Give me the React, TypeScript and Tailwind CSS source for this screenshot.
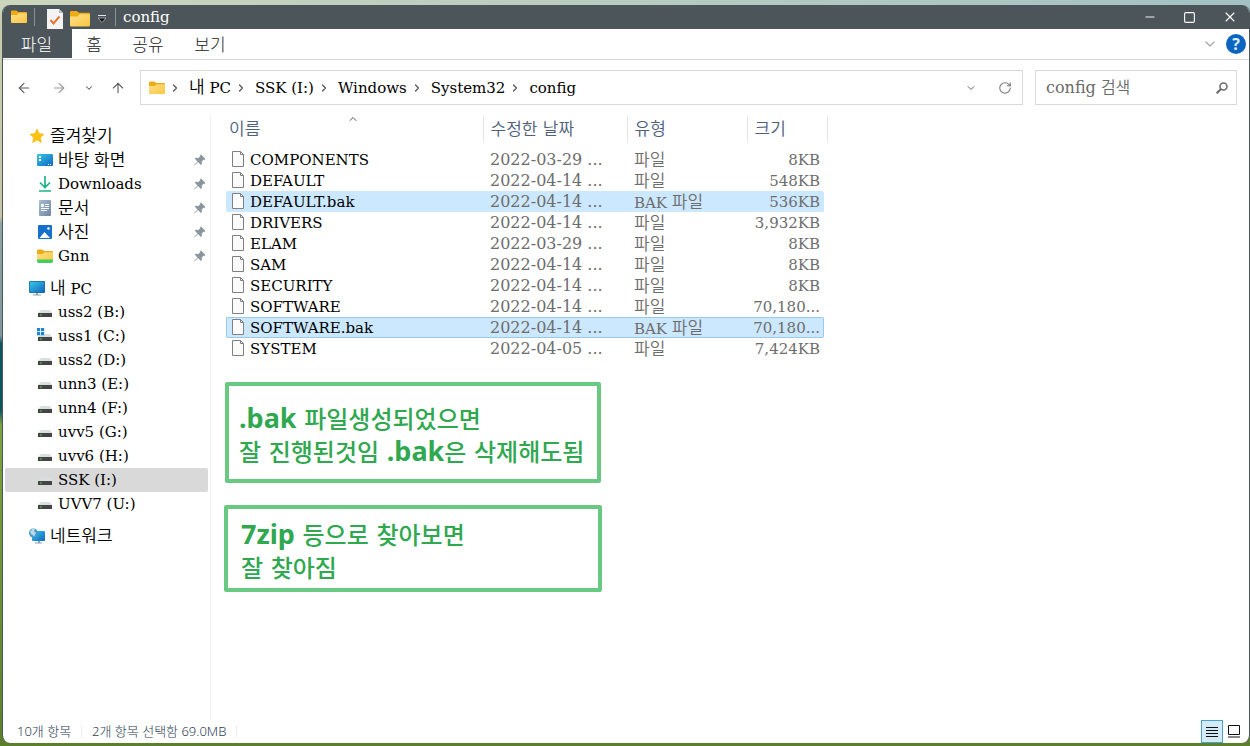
import { ArrowLeft, ArrowRight, ArrowUp, ChevronDown, ChevronRight, ChevronUp, Minus, RotateCw, Square, X } from 'lucide-react';
import type { ReactNode } from 'react';

const serif = "font-['DejaVu_Serif','Noto_Sans_CJK_KR',serif]";
const sans = "font-['Noto_Sans_CJK_KR',sans-serif]";

const files = [
  { name: 'COMPONENTS', date: '2022-03-29 ...', type: '파일', size: '8KB' },
  { name: 'DEFAULT', date: '2022-04-14 ...', type: '파일', size: '548KB' },
  { name: 'DEFAULT.bak', date: '2022-04-14 ...', type: 'BAK 파일', size: '536KB', selected: true },
  { name: 'DRIVERS', date: '2022-04-14 ...', type: '파일', size: '3,932KB' },
  { name: 'ELAM', date: '2022-03-29 ...', type: '파일', size: '8KB' },
  { name: 'SAM', date: '2022-04-14 ...', type: '파일', size: '8KB' },
  { name: 'SECURITY', date: '2022-04-14 ...', type: '파일', size: '8KB' },
  { name: 'SOFTWARE', date: '2022-04-14 ...', type: '파일', size: '70,180...' },
  { name: 'SOFTWARE.bak', date: '2022-04-14 ...', type: 'BAK 파일', size: '70,180...', selected: true, focused: true },
  { name: 'SYSTEM', date: '2022-04-05 ...', type: '파일', size: '7,424KB' },
];

const drives = ['uss2 (B:)', 'uss1 (C:)', 'uss2 (D:)', 'unn3 (E:)', 'unn4 (F:)', 'uvv5 (G:)', 'uvv6 (H:)', 'SSK (I:)', 'UVV7 (U:)'];

const crumbs = ['내 PC', 'SSK (I:)', 'Windows', 'System32', 'config'];

// Hangul is set a little larger than the Latin text beside it
function Mixed({ text }: { text: string }) {
  return (
    <>
      {text.split(/([가-힣]+)/).map((part, i) =>
        i % 2 ? <span key={i} className="text-[17px] font-[350]">{part}</span> : part,
      )}
    </>
  );
}

function FolderIcon({ className, green }: { className?: string; green?: boolean }) {
  return (
    <svg viewBox="0 0 16 14" className={className} aria-hidden="true">
      <defs>
        <linearGradient id="folder" x1="0" y1="0" x2="1" y2="1">
          <stop offset="0" stopColor="#ffe08a" />
          <stop offset="1" stopColor="#fbc640" />
        </linearGradient>
      </defs>
      <path d="M0 1.5Q0 .5 1 .5h4.5L7.2 2H15q1 0 1 1v3H0z" fill="#ecac18" />
      <path d="M0 5h6l1.6-1.8H15q1 0 1 1V12q0 1-1 1H1q-1 0-1-1z" fill="url(#folder)" />
      {green && <path d="M0 10.5h16v1.5q0 2-2 2H2q-2 0-2-2z" fill="#3fd05a" />}
    </svg>
  );
}

function StarIcon() {
  return (
    <svg viewBox="0 0 16 16" className="h-4 w-4" aria-hidden="true">
      <path d="M8 1l2.1 4.6 4.9.6-3.6 3.4 1 5L8 12.1 3.6 14.6l1-5L1 6.2l4.9-.6z" fill="#fdc30d" stroke="#f5b30a" strokeWidth=".6" strokeLinejoin="round" />
    </svg>
  );
}

function DesktopIcon() {
  return (
    <svg viewBox="0 0 16 16" className="h-4 w-4" aria-hidden="true">
      <defs>
        <linearGradient id="screen" x1="0" y1="0" x2="1" y2="1">
          <stop offset="0" stopColor="#35c9e4" />
          <stop offset="1" stopColor="#1265c0" />
        </linearGradient>
      </defs>
      <rect y="2" width="16" height="12" rx="1" fill="url(#screen)" />
      <path d="M2 4h2v2H2zM2 7h2v2H2zM11 12h1v1h-1zM13 12h1v1h-1z" fill="#fff" />
    </svg>
  );
}

function DownloadIcon() {
  return (
    <svg viewBox="0 0 16 16" className="h-4 w-4" fill="none" stroke="#1fb28c" strokeWidth="1.7" aria-hidden="true">
      <path d="M8 0v11M3 6.500l5 5 5-5M2 15h12" />
    </svg>
  );
}

function DocumentIcon() {
  return (
    <svg viewBox="0 0 16 16" className="h-4 w-4" aria-hidden="true">
      <defs>
        <linearGradient id="doc" x1="0" y1="0" x2="1" y2="1">
          <stop offset="0" stopColor="#a9bdd2" />
          <stop offset="1" stopColor="#6d86a4" />
        </linearGradient>
      </defs>
      <rect x="2" width="12" height="16" rx="1" fill="url(#doc)" />
      <path d="M4 4h3v3H4zM8 4h4v1H8zM8 6h4v1H8zM4 8h8v1H4zM4 10h6v1H4z" fill="#fff" />
    </svg>
  );
}

function PictureIcon() {
  return (
    <svg viewBox="0 0 16 16" className="h-4 w-4" aria-hidden="true">
      <rect x="1" y="1" width="14" height="14" rx="1" fill="#1671cc" />
      <path d="M2.500 14L7.500 8l5.500 6z" fill="#fff" />
      <circle cx="11.5" cy="4.5" r="1.3" fill="#fff" />
    </svg>
  );
}

function MonitorIcon() {
  return (
    <svg viewBox="0 0 16 16" className="h-4 w-4" aria-hidden="true">
      <rect y="1" width="16" height="12" rx="1" fill="#18699f" />
      <rect x=".7" y="1.7" width="14.6" height="10.6" fill="url(#screen)" />
      <path d="M7 13h2v1.5h3v1H4v-1h3z" fill="#8aa2b3" />
    </svg>
  );
}

function NetworkIcon() {
  return (
    <svg viewBox="0 0 16 16" className="h-4 w-4" aria-hidden="true">
      <rect x="3" y="3" width="13" height="10" rx="1" fill="url(#screen)" />
      <path d="M9 13h2v1.5h2v1H6v-1h3z" fill="#8aa2b3" />
      <circle cx="4.5" cy="5" r="4.5" fill="#4e9ac6" />
      <path d="M1 3q2 0 2-2.500l3 .3-1 2.700 2 1-2 4q-1-2-3-2.500z" fill="#b9dced" />
    </svg>
  );
}

function DriveIcon({ system }: { system?: boolean }) {
  return (
    <svg viewBox="0 0 16 16" className="h-4 w-4" aria-hidden="true">
      <path d="M4 6h9l2 3H1z" fill="#dcdfe1" />
      <rect x="1" y="9" width="14" height="4" fill="#454545" />
      <path d="M3 10.500h2v1H3z" fill="#46d24c" />
      {system && <path d="M0 0h3.200v3.200H0zM4 0h3.200v3.200H4zM0 4h3.200v3.200H0zM4 4h3.200v3.200H4z" fill="#1f86d2" />}
    </svg>
  );
}

function PinIcon() {
  return (
    <svg viewBox="0 0 12 12" className="h-3 w-3" aria-hidden="true">
      <path d="M7 .5L11.500 5l-1 .8-1-.1-1.700 1.800.1 2.500-1 1L4 8 .8 11.300l-.5-.5L3.500 7.500.8 4.700l1-1 2.600.2L6.200 2.200 6.100 1.300z" fill="#8b979f" />
    </svg>
  );
}

function FileIcon() {
  return (
    <svg viewBox="0 0 12 16" className="mb-px h-4 w-3 shrink-0" aria-hidden="true">
      <path d="M.5.500h8l3 3v12H.500z" fill="#fbfbfb" stroke="#808080" />
      <path d="M8.500.500v3h3" fill="none" stroke="#808080" />
    </svg>
  );
}

type NavItemProps = { icon: ReactNode; label: string; nested?: boolean; pinned?: boolean; active?: boolean };

function NavItem({ icon, label, nested, pinned, active }: NavItemProps) {
  return (
    <a
      href="#"
      className={`mr-[2px] ml-[2px] flex h-6 items-center gap-[5px] rounded-xs pr-[2px] ${nested ? 'pl-8' : 'pl-6'} ${active ? 'bg-[#d9d9d9]' : ''}`}
    >
      {icon}
      <span className="flex-1 whitespace-nowrap leading-6"><Mixed text={label} /></span>
      {pinned && <PinIcon />}
    </a>
  );
}

function TitleBar() {
  return (
    <header className="flex h-6 items-center bg-[#4b555a] pl-2 text-white">
      <FolderIcon className="h-[14px] w-4" />
      <span className="ml-[7px] h-[18px] w-px bg-[#8b9295]" />
      <button aria-label="속성" className="ml-3">
        <svg viewBox="0 0 16 20" className="mt-1 h-5 w-4" aria-hidden="true">
          <path d="M0 0h12l4 4v16H0z" fill="#f3f3f3" />
          <path d="M12 0v4h4z" fill="#b9bdbf" />
          <path d="M3.500 11l3 3.500 6-7" fill="none" stroke="#ea7434" strokeWidth="2" />
        </svg>
      </button>
      <button aria-label="새 폴더" className="ml-[7px]">
        <FolderIcon className="mt-1 h-[18px] w-5" />
      </button>
      <button aria-label="빠른 실행 도구 모음 사용자 지정" className="ml-2">
        <svg viewBox="0 0 8 8" className="mt-1 h-2 w-2" aria-hidden="true">
          <path d="M0 .5h8" stroke="#dfe1e2" />
          <path d="M0 3h8L4 7.500z" fill="#111" stroke="#dfe1e2" strokeWidth=".6" />
        </svg>
      </button>
      <span className="ml-[9px] h-[18px] w-px bg-[#8b9295]" />
      <h1 className="ml-[7px] flex-1 leading-6">config</h1>
      <div className="flex items-center gap-[26px] pr-[11px]">
        <button aria-label="최소화"><Minus className="h-[14px] w-[14px]" strokeWidth={1.6} /></button>
        <button aria-label="최대화"><Square className="h-[13px] w-[13px]" strokeWidth={2} /></button>
        <button aria-label="닫기"><X className="h-4 w-4" strokeWidth={1.6} /></button>
      </div>
    </header>
  );
}

function Ribbon() {
  return (
    <nav className={`flex h-[31px] items-start border-b border-[#d9dadb] text-[17px] leading-[29px] text-[#222] ${sans} font-light`}>
      <button className="h-[29px] w-[69px] bg-[#4b555a] pr-[2px] text-white">파일</button>
      <button className="w-11">홈</button>
      <button className="w-16">공유</button>
      <button className="w-15">보기</button>
      <div className="mt-[5px] ml-auto flex items-center gap-2 pr-[3px]">
        <button aria-label="리본 확장"><ChevronDown className="h-4 w-4 text-[#aaa]" /></button>
        <button aria-label="도움말" className="h-5 w-5 rounded-full bg-[#0b64c0] font-['Open_Sans',sans-serif] text-base leading-5 font-bold text-[#d8efff]">?</button>
      </div>
    </nav>
  );
}

function AddressBar() {
  return (
    <div className="flex h-[55px] items-center pr-3">
      <div className="flex w-[137px] items-center pl-[13px] text-[#5d5d5d]">
        <button aria-label="뒤로"><ArrowLeft className="h-4 w-4" strokeWidth={1.7} /></button>
        <button aria-label="앞으로" className="ml-[19px]"><ArrowRight className="h-4 w-4 text-[#999]" strokeWidth={1.7} /></button>
        <button aria-label="최근 위치" className="ml-[17px]"><ChevronDown className="h-[10px] w-[10px]" strokeWidth={2.5} /></button>
        <button aria-label="위로" className="ml-4"><ArrowUp className="h-4 w-4" strokeWidth={1.7} /></button>
      </div>
      <div className="flex h-[35px] flex-1 items-center border border-[#d9d9d9] pr-[10px] pl-2">
        <FolderIcon className="mr-1 h-[14px] w-4" />
        {crumbs.map((crumb) => (
          <div key={crumb} className="flex items-center">
            <ChevronRight className="mr-2 h-3 w-3 text-[#555]" strokeWidth={2.5} />
            <a href="#" className="mr-1 leading-6"><Mixed text={crumb} /></a>
          </div>
        ))}
        <button aria-label="이전 위치" className="ml-auto"><ChevronDown className="h-3 w-3 text-[#666]" /></button>
        <button aria-label="새로 고침" className="ml-[21px]"><RotateCw className="h-[14px] w-[14px] text-[#777]" strokeWidth={1.8} /></button>
      </div>
      <label className="ml-3 flex h-[35px] w-[202px] items-center border border-[#d9d9d9] pr-2 pl-[10px]">
        <input aria-label="config 검색" placeholder="config 검색" className="min-w-0 flex-1 text-base font-[350] placeholder:text-[#6a6a6a] focus:outline-none" />
        <svg viewBox="0 0 12 12" className="h-3 w-3" fill="none" stroke="#6d6d6d" strokeWidth="1.6" aria-hidden="true">
          <circle cx="7.500" cy="4.500" r="3.500" />
          <path d="M5 7L.6 11.400" strokeWidth="2" />
        </svg>
      </label>
    </div>
  );
}

function Sidebar() {
  return (
    <nav aria-label="탐색 창" className="flex w-[208px] shrink-0 flex-col gap-2 border-r border-[#f0f0f0] pt-[9px]">
      <div>
        <NavItem icon={<StarIcon />} label="즐겨찾기" />
        <NavItem icon={<DesktopIcon />} label="바탕 화면" nested pinned />
        <NavItem icon={<DownloadIcon />} label="Downloads" nested pinned />
        <NavItem icon={<DocumentIcon />} label="문서" nested pinned />
        <NavItem icon={<PictureIcon />} label="사진" nested pinned />
        <NavItem icon={<FolderIcon className="h-4 w-4" green />} label="Gnn" nested pinned />
      </div>
      <div>
        <NavItem icon={<MonitorIcon />} label="내 PC" />
        {drives.map((drive) => (
          <NavItem key={drive} icon={<DriveIcon system={drive === 'uss1 (C:)'} />} label={drive} nested active={drive === 'SSK (I:)'} />
        ))}
      </div>
      <NavItem icon={<NetworkIcon />} label="네트워크" />
    </nav>
  );
}

function FileTable() {
  return (
    <table className="w-[601px] table-fixed border-collapse text-left">
      <colgroup>
        <col className="w-[257px]" />
        <col className="w-36" />
        <col className="w-30" />
        <col className="w-20" />
      </colgroup>
      <thead className="text-[17px] leading-6 text-[#4c607a]">
        <tr className="h-7">
          <th className="relative border-r border-[#e5e5e5] p-0 pt-[2px] pb-[2px] pl-[3px] font-[350]">
            이름
            <ChevronUp className="absolute -top-[2px] left-[121px] h-3 w-3 text-[#555]" />
          </th>
          <th className="border-r border-[#e5e5e5] p-0 pt-[2px] pb-[2px] pl-[7px] font-[350]">수정한 날짜</th>
          <th className="border-r border-[#e5e5e5] p-0 pt-[2px] pb-[2px] pl-[7px] font-[350]">유형</th>
          <th className="border-r border-[#e5e5e5] p-0 pt-[2px] pb-[2px] pl-[7px] font-[350]">크기</th>
        </tr>
        <tr className="h-[6px]" />
      </thead>
      <tbody className="leading-[21px] text-[#6d6d6d]">
        {files.map((file) => {
          const cell = `h-[21px] border-y whitespace-nowrap ${file.selected ? 'bg-[#cce8ff]' : ''} ${file.focused ? 'border-[#99c9ec]' : 'border-transparent'}`;
          return (
            <tr key={file.name}>
              <td className="p-0">
                <div className={`${cell} flex gap-[6px] rounded-l-xs border-l pt-px pl-[5px] leading-[19px] text-black`}>
                  <FileIcon />
                  {file.name}
                </div>
              </td>
              <td className="p-0">
                <div className={`${cell} pl-[7px] text-base leading-[19px]`}>{file.date}</div>
              </td>
              <td className="p-0">
                <div className={`${cell} pl-[7px]`}><Mixed text={file.type} /></div>
              </td>
              <td className="p-0">
                <div className={`${cell} mr-[3px] rounded-r-xs border-r pr-[3px] text-right`}>{file.size}</div>
              </td>
            </tr>
          );
        })}
      </tbody>
    </table>
  );
}

function Latin({ children }: { children: ReactNode }) {
  return <b className="font-['Noto_Sans',sans-serif] text-[27px] leading-none font-bold">{children}</b>;
}

function Notes() {
  return (
    <div className="font-['DejaVu_Sans','Noto_Sans_CJK_KR',sans-serif] text-2xl leading-[33px] font-medium text-[#2fa850]">
      <p className="mt-[23px] ml-[-1px] h-[101px] w-[376px] rounded-xs border-4 border-[#69c983] pt-[18px] pl-[10px] whitespace-nowrap">
        <Latin>.bak</Latin> 파일생성되었으면
        <br />
        잘 진행된것임 <Latin>.bak</Latin>은 삭제해도됨
      </p>
      <p className="mt-[22px] ml-[-2px] h-[87px] w-[378px] rounded-xs border-4 border-[#69c983] pt-[11px] pl-[13px] whitespace-nowrap">
        <Latin>7zip</Latin> 등으로 찾아보면
        <br />
        잘 찾아짐
      </p>
    </div>
  );
}

function StatusBar() {
  return (
    <footer className="flex h-[23px] items-center pl-[14px] font-['Noto_Sans','Noto_Sans_CJK_KR',sans-serif] text-[13px] font-light text-[#2d3d53]">
      <span className="border-r border-[#eee] pr-[10px] pb-px leading-3">10개 항목</span>
      <span className="border-r border-[#eee] pr-[10px] pb-px pl-[10px] leading-3">2개 항목 선택함 69.0MB</span>
      <div className="ml-auto flex items-center pr-[9px]">
        <button aria-label="자세히" className="flex h-[23px] w-[22px] items-center justify-center border border-[#4ba0c8] bg-[#d2ebf6]">
          <svg viewBox="0 0 12 11" className="mt-px h-[11px] w-3" stroke="#111" aria-hidden="true">
            <path d="M0 .5h12M0 3.500h12M0 6.500h12M0 9.500h12" />
          </svg>
        </button>
        <button aria-label="큰 아이콘" className="ml-[5px]">
          <svg viewBox="0 0 12 13" className="h-[13px] w-3" fill="none" stroke="#111" aria-hidden="true">
            <path d="M.5.500h11v9H.500zM0 12h12" />
          </svg>
        </button>
      </div>
    </footer>
  );
}

export default function App() {
  return (
    <div className="flex min-h-screen flex-col bg-[linear-gradient(to_bottom,#c6cfb0_0%,#c9c6a8_29%,#8fa6a4_30%,#7d979b_45%,#0f5560_46%,#0f5560_55%,#7da342_57%,#5c7f2d_100%)] pb-[3px]">
      <div className="-mb-2 h-[13px] bg-linear-to-r from-[#ccd6bd] to-[#a3c1c3]" />
      <div className={`ml-[2px] flex flex-1 flex-col overflow-hidden rounded-lg border-r border-l border-[#4b555a] bg-white text-[15px] text-black ${serif}`}>
        <TitleBar />
        <Ribbon />
        <AddressBar />
        <div className="flex flex-1">
          <Sidebar />
          <main className="pl-[15px]">
            <FileTable />
            <Notes />
          </main>
        </div>
        <StatusBar />
      </div>
    </div>
  );
}
